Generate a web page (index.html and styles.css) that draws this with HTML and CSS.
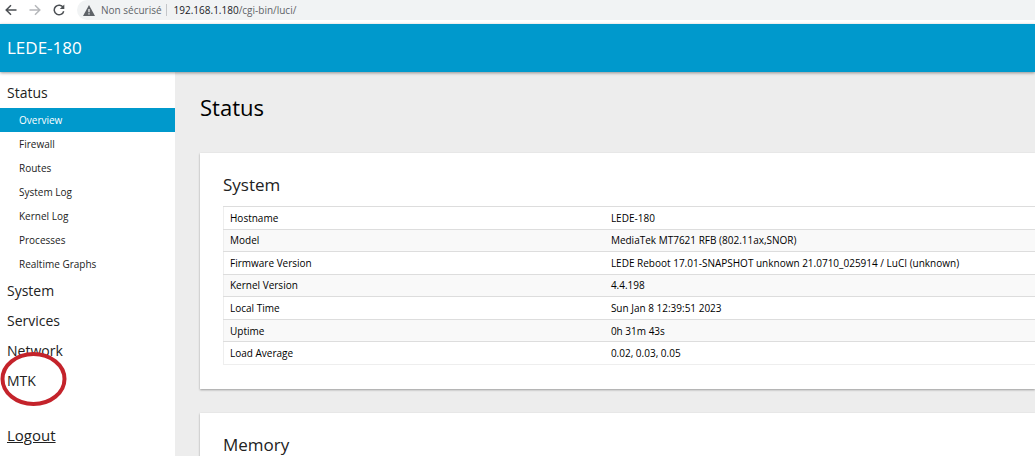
FILE: index.html
```html
<!DOCTYPE html>
<html lang="en">
<head>
<meta charset="utf-8">
<title>LEDE-180 - Overview - LuCI</title>
<link rel="stylesheet" href="styles.css">
</head>
<body>
<div class="toolbar">
  <button class="tool" aria-label="Back"><svg viewBox="0 0 12 12"><path d="M11.5 6H1.5M6 1.2L1.2 6L6 10.8"/></svg></button>
  <button class="tool tool-off" aria-label="Forward" disabled><svg viewBox="0 0 12 12"><path d="M.5 6H10.5M6 1.2L10.8 6L6 10.8"/></svg></button>
  <button class="tool" aria-label="Reload"><svg viewBox="0 0 12 12"><path d="M10.2 3.6A4.8 4.8 0 1 0 10.7 7.2"/><path class="solid" d="M11.3 .5V5H6.8z"/></svg></button>
  <div class="address">
    <svg class="warn" viewBox="0 0 12 11"><path d="M6 0L12 11H0z" fill="#5f6368"/><path d="M6 4V7.2M6 8.2V9.5" stroke="#f1f3f4" stroke-width="1.3"/></svg>
    <span class="insecure">Non sécurisé</span>
    <span class="url"><span class="host">192.168.1.180</span>/cgi-bin/luci/</span>
  </div>
</div>
<header class="brand"><a href="#">LEDE-180</a></header>
<div class="layout">
  <nav class="sidebar">
    <a class="group" href="#">Status</a>
    <ul class="submenu">
      <li><a class="active" href="#">Overview</a></li>
      <li><a href="#">Firewall</a></li>
      <li><a href="#">Routes</a></li>
      <li><a href="#">System Log</a></li>
      <li><a href="#">Kernel Log</a></li>
      <li><a href="#">Processes</a></li>
      <li><a href="#">Realtime Graphs</a></li>
    </ul>
    <a class="group" href="#">System</a>
    <a class="group" href="#">Services</a>
    <a class="group" href="#">Network</a>
    <a class="group marked" href="#">MTK<svg class="ring" viewBox="0 0 68 56"><ellipse cx="33.5" cy="28" rx="31" ry="25"/></svg></a>
    <a class="group logout" href="#">Logout</a>
  </nav>
  <main class="content">
    <h1>Status</h1>
    <section class="card">
      <h2>System</h2>
      <table>
        <tr><th scope="row">Hostname</th><td>LEDE-180</td></tr>
        <tr><th scope="row">Model</th><td>MediaTek MT7621 RFB (802.11ax,SNOR)</td></tr>
        <tr><th scope="row">Firmware Version</th><td>LEDE Reboot 17.01-SNAPSHOT unknown 21.0710_025914 / LuCI (unknown)</td></tr>
        <tr><th scope="row">Kernel Version</th><td>4.4.198</td></tr>
        <tr><th scope="row">Local Time</th><td>Sun Jan 8 12:39:51 2023</td></tr>
        <tr><th scope="row">Uptime</th><td>0h 31m 43s</td></tr>
        <tr><th scope="row">Load Average</th><td>0.02, 0.03, 0.05</td></tr>
      </table>
    </section>
    <section class="card">
      <h2>Memory</h2>
    </section>
  </main>
</div>
</body>
</html>
```
FILE: styles.css
```css
* { box-sizing: border-box; }
body {
  margin: 0;
  height: 100vh;
  display: flex;
  flex-direction: column;
  overflow: hidden;
  background: #ededed;
  color: #000;
  font-family: "Open Sans", "Noto Sans", sans-serif;
  font-size: 10px;
}
a { color: inherit; text-decoration: none; }

.toolbar {
  flex: none;
  display: flex;
  height: 24px;
  padding: 0 0 4px 5px;
  gap: 12px;
  align-items: center;
  background: #fff;
}
.tool { width: 12px; height: 12px; padding: 0; border: 0; background: none; }
.tool svg { display: block; width: 12px; height: 12px; fill: none; stroke: #4b4f53; stroke-width: 1.5; }
.tool .solid { fill: #4b4f53; stroke: none; }
.tool-off svg { stroke: #b5b7ba; }
.address {
  flex: 1;
  display: flex;
  align-items: center;
  height: 20px;
  padding-left: 6px;
  border-radius: 10px 0 0 10px;
  background: #f1f3f4;
  color: #5f6368;
}
.warn { width: 12px; height: 11px; margin-right: 6px; }
.insecure { padding-right: 4px; border-right: 1px solid #c4c6c9; line-height: 12px; }
.url { padding-left: 7px; }
.host { color: #202124; }

.brand {
  flex: none;
  z-index: 1;
  padding: 0 7px;
  background: #0099cc;
  box-shadow: 0 1px 3px rgba(0, 0, 0, .4);
  color: #fff;
  font-size: 17px;
  line-height: 48px;
}

.layout { flex: 1; display: flex; min-height: 0; }
.sidebar { flex: none; width: 175px; padding-top: 6px; background: #fff; color: #222; }
.group { display: block; padding-left: 7px; font-size: 14px; line-height: 30px; }
.submenu { margin: 0; padding: 0; list-style: none; }
.submenu a { display: block; padding-left: 19px; line-height: 24px; color: #222; }
.submenu .active { background: #0099cc; color: #fff; }
.marked { position: relative; }
.ring { position: absolute; top: -15px; left: 0; width: 68px; height: 56px; fill: none; stroke: #c4232b; stroke-width: 4; }
.logout { margin-top: 24px; font-size: 15px; text-decoration: underline; }

.content { flex: 1; min-width: 0; padding-left: 25px; overflow: hidden; }
h1 { margin: 19px 0 30px; font-size: 22px; font-weight: 400; line-height: 32px; color: #000; }
.card {
  margin-bottom: 24px;
  padding: 20px 0 24px 23px;
  background: #fff;
  box-shadow: 0 1px 2px rgba(0, 0, 0, .35);
}
h2 { margin: 0 0 9px; font-size: 17px; font-weight: 400; line-height: 24px; color: #222; }
table {
  width: 100%;
  height: 159px;
  border-collapse: collapse;
  border: 1px solid #eee;
  border-top-color: #ccc;
  border-right: 0;
}
th, td { width: 53%; padding: 0 6px; border-top: 1px solid #ddd; font-weight: 400; text-align: left; line-height: 20px; }
th { width: 47%; }
tr:nth-child(even) { background: #f9f9f9; }
```
